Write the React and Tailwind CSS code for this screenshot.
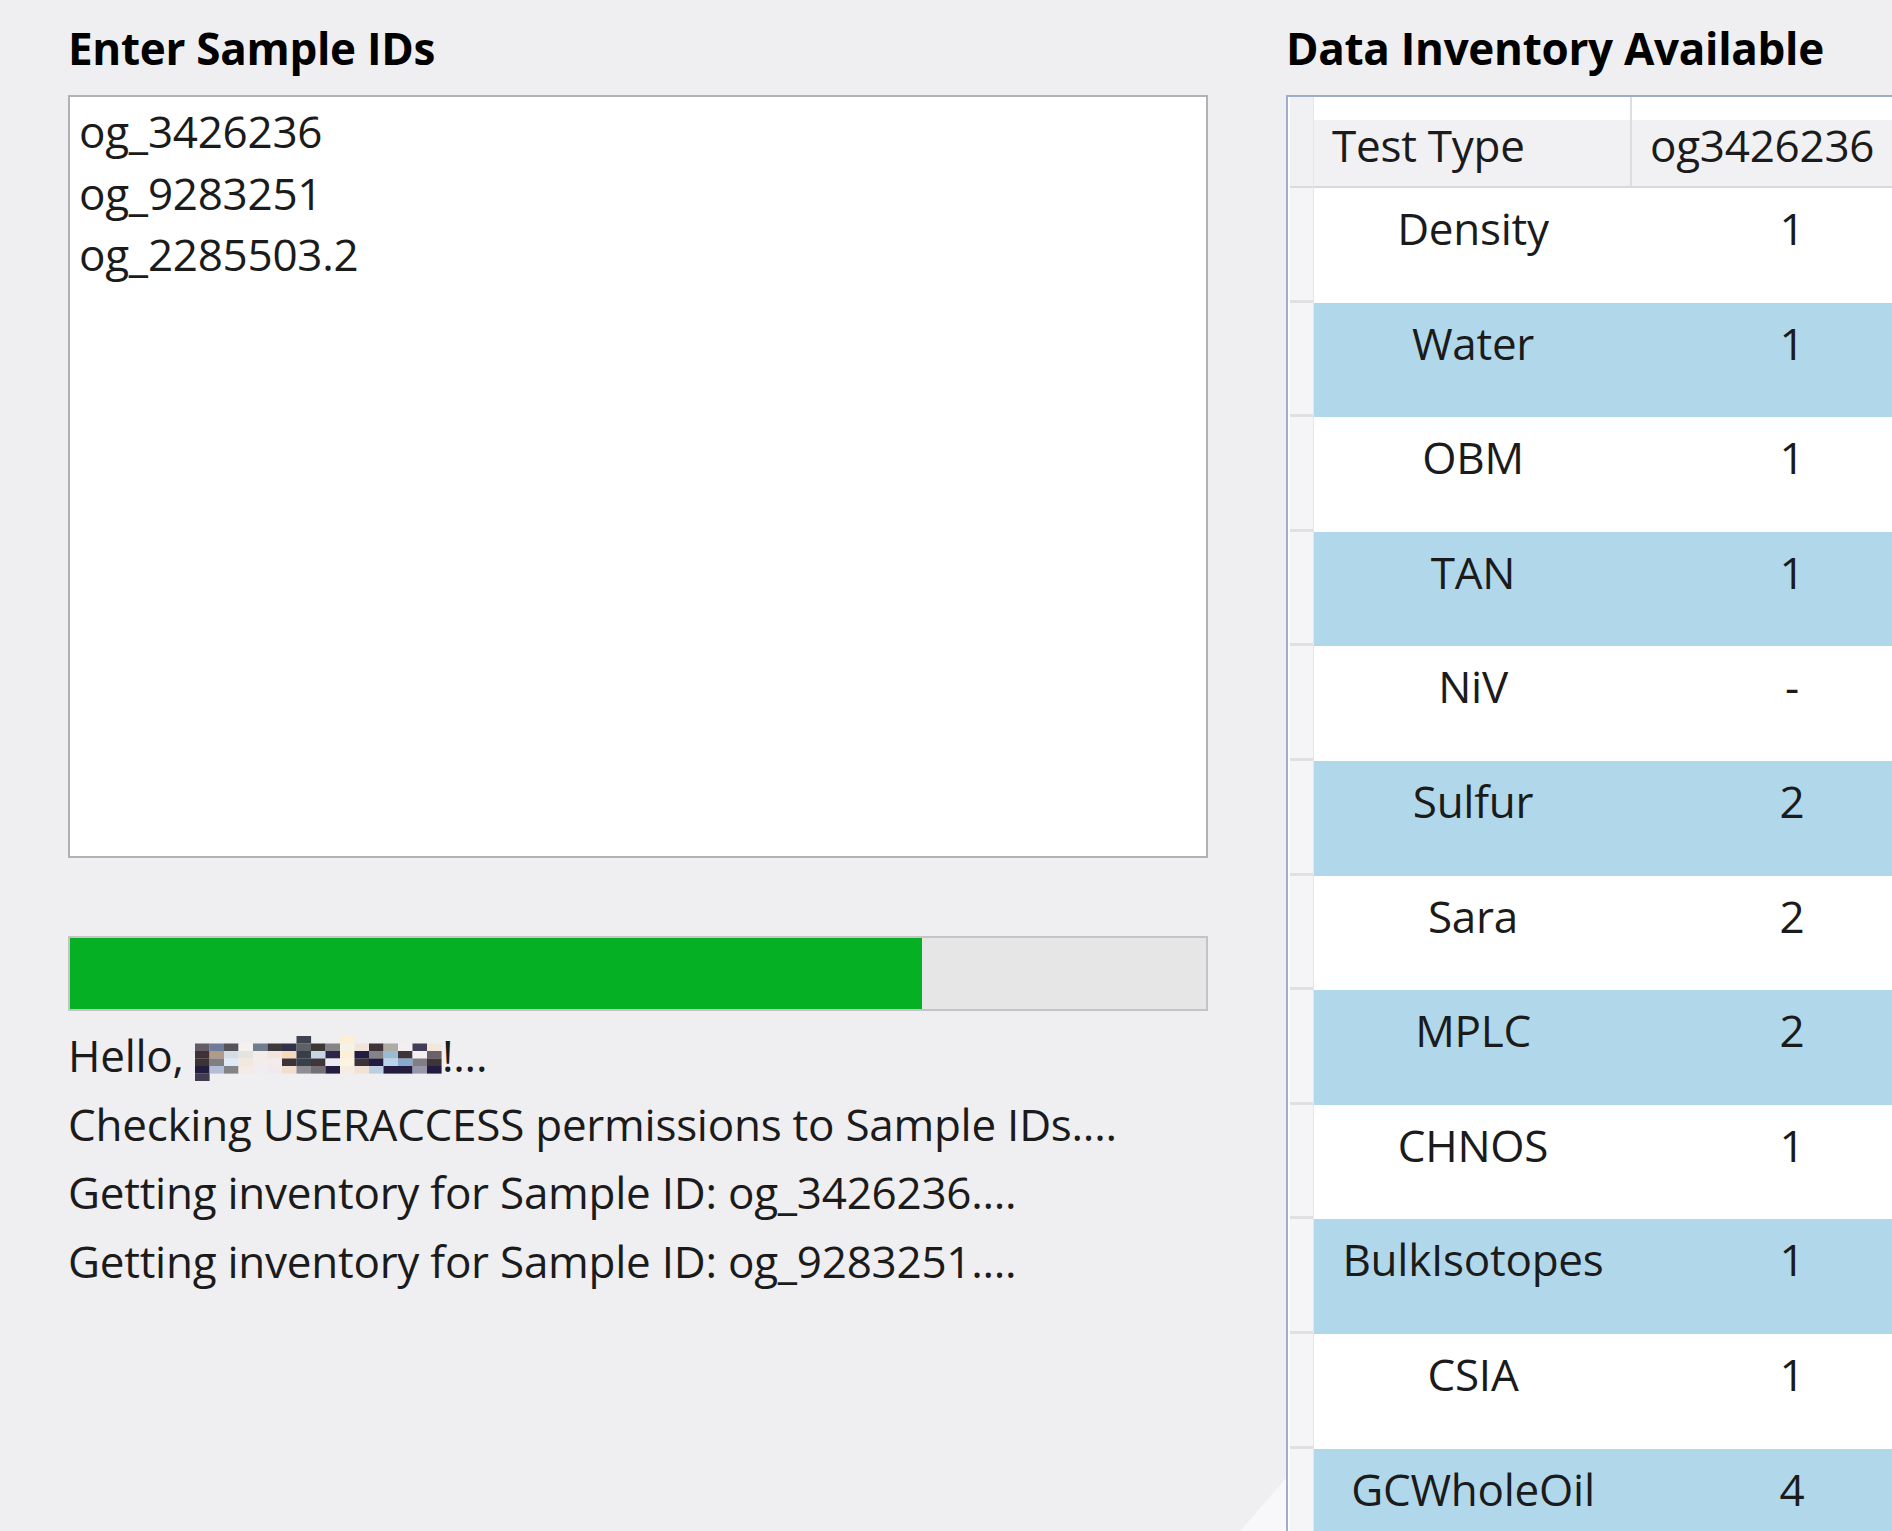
import React from 'react';

const sampleIds = ['og_3426236', 'og_9283251', 'og_2285503.2'];

const statusLines = [
    'Checking USERACCESS permissions to Sample IDs....',
    'Getting inventory for Sample ID: og_3426236....',
    'Getting inventory for Sample ID: og_9283251....',
];

const inventory = [
    ['Density', '1'],
    ['Water', '1'],
    ['OBM', '1'],
    ['TAN', '1'],
    ['NiV', '-'],
    ['Sulfur', '2'],
    ['Sara', '2'],
    ['MPLC', '2'],
    ['CHNOS', '1'],
    ['BulkIsotopes', '1'],
    ['CSIA', '1'],
    ['GCWholeOil', '4'],
];

// pixelated user name, one row per line, null = background
const mosaic = [
    [null, null, null, null, null, null, null, '#3f434f', null, null, '#fcefd6', null, null, null, null, null, null],
    ['#615c66', '#6f7b98', '#55525a', '#f5f1ef', '#6f7d8e', '#3c3a3c', '#33304a', '#5f5f66', '#3d3835', '#848489', '#f6f2e6', '#f2e4da', '#3e3338', '#adaba3', '#f5eef0', '#3f3d58', '#f3e7dc'],
    ['#3e3236', '#b09a88', '#d5dde4', '#e3e3e0', '#f3ece9', '#f3e5de', '#f4d9bd', '#3a3e48', '#c4d6e4', '#2c2548', '#fcefd6', '#231c40', '#848387', '#9bbbd3', '#3d3538', '#f6eef0', '#6b6269'],
    ['#3d3336', '#7f7e82', '#dde9f6', '#f4e7dd', '#f3ecec', '#f3eaea', '#3d3236', '#39404a', '#40353a', '#ecebf3', '#fcf4e2', '#3b3337', '#231c40', '#b7d4ea', '#88a8cf', '#7f7e82', '#3e3538'],
    ['#231d40', '#b3bdd4', '#838287', '#f4ebe6', '#f1ecef', '#f0eaee', '#f0dfce', '#8e8d91', '#727074', '#241d40', '#f5ece2', '#f3e1d6', '#bbcfe1', '#231c40', '#231c40', '#9896a8', '#231c40'],
    ['#433c4e', null, null, null, null, null, null, null, null, null, null, null, null, null, null, null, null],
];

const Mosaic = () => (
    <svg width="247" height="45" viewBox="0 0 247 45" className="inline-block align-middle -mt-[4px]">
        {mosaic.map((row, r) =>
            row.map((c, i) =>
                c ? <rect key={`${r}-${i}`} x={i * 14.5} y={r * 7.5} width="14.6" height="7.6" fill={c} /> : null
            )
        )}
    </svg>
);

const App = () => {
    return (
        <div className="relative w-[1892px] h-[1531px] overflow-hidden bg-[#efeef1] flex text-[#1b1b1b] font-['Open_Sans',sans-serif]">
            {/* left: sample ids + progress */}
            <div className="ml-[68px] w-[1140px] shrink-0 flex flex-col">
                <h1 className="h-[95px] shrink-0 flex items-center text-[44px] font-bold tracking-[-0.3px] text-black">Enter Sample IDs</h1>
                <div className="h-[763px] shrink-0 bg-white border-2 border-[#b2b2b6] px-[9px] pt-[4px] text-[44px] leading-[61.5px] tracking-[-0.25px]">
                    {sampleIds.map((id) => (
                        <div key={id}>{id}</div>
                    ))}
                </div>
                <div className="mt-[78px] h-[75px] shrink-0 bg-[#e6e6e6] border-2 border-[#c4c4c6]">
                    <div className="h-full w-[75%] bg-[#06b025]" />
                </div>
                <div className="mt-[10px] text-[44px] leading-[68.5px] tracking-[-0.25px] whitespace-nowrap">
                    <div>
                        Hello, <Mosaic />!...
                    </div>
                    {statusLines.map((line) => (
                        <div key={line}>{line}</div>
                    ))}
                </div>
            </div>

            {/* right: inventory grid */}
            <div className="ml-[78px] flex-1 flex flex-col min-w-0">
                <h2 className="h-[95px] shrink-0 flex items-center text-[44px] font-bold tracking-[-0.3px] text-black whitespace-nowrap">Data Inventory Available</h2>
                <div className="flex-1 border-l-2 border-t-2 border-[#9eaec8] pl-[2px] bg-white flex overflow-hidden">
                    <div className="w-[24px] shrink-0 bg-[#f5f5f7] border-r border-[#e6e6ea] flex flex-col">
                        <div className="h-[91px] shrink-0 bg-[#f1f1f3] border-b-2 border-[#dcdcdf]" />
                        {inventory.map(([name]) => (
                            <div key={name} className="h-[114.6px] shrink-0 border-b-[3px] border-[#e0e0e3]" />
                        ))}
                    </div>
                    <div className="flex flex-col w-[640px] shrink-0">
                        <div className="h-[91px] shrink-0 flex bg-gradient-to-b from-white from-[26%] to-[#f1f1f3] to-[26%] border-b-2 border-[#d9d9dc] text-[44px] tracking-[-0.25px]">
                            <div className="w-[318px] pl-[18px] pt-[6px] flex items-center border-r-2 border-[#dedee2]">Test Type</div>
                            <div className="w-[318px] pl-[18px] pt-[6px] flex items-center">og3426236</div>
                        </div>
                        {inventory.map(([name, count], i) => (
                            <div
                                key={name}
                                className={`h-[114.6px] shrink-0 flex text-[44px] leading-[60px] tracking-[-0.25px] ${i % 2 === 1 ? 'bg-[#b1d8ea]' : 'bg-white'}`}
                            >
                                <div className="w-[318px] pt-[10px] text-center">{name}</div>
                                <div className="w-[320px] pt-[10px] text-center">{count}</div>
                            </div>
                        ))}
                    </div>
                </div>
            </div>

            {/* faint window glare at the bottom edge */}
            <svg className="absolute left-[1236px] top-[1478px]" width="50" height="53" viewBox="0 0 50 53">
                <polygon points="50,0 50,53 4,53" fill="#f8f7f9" />
            </svg>
        </div>
    );
};

export default App;
